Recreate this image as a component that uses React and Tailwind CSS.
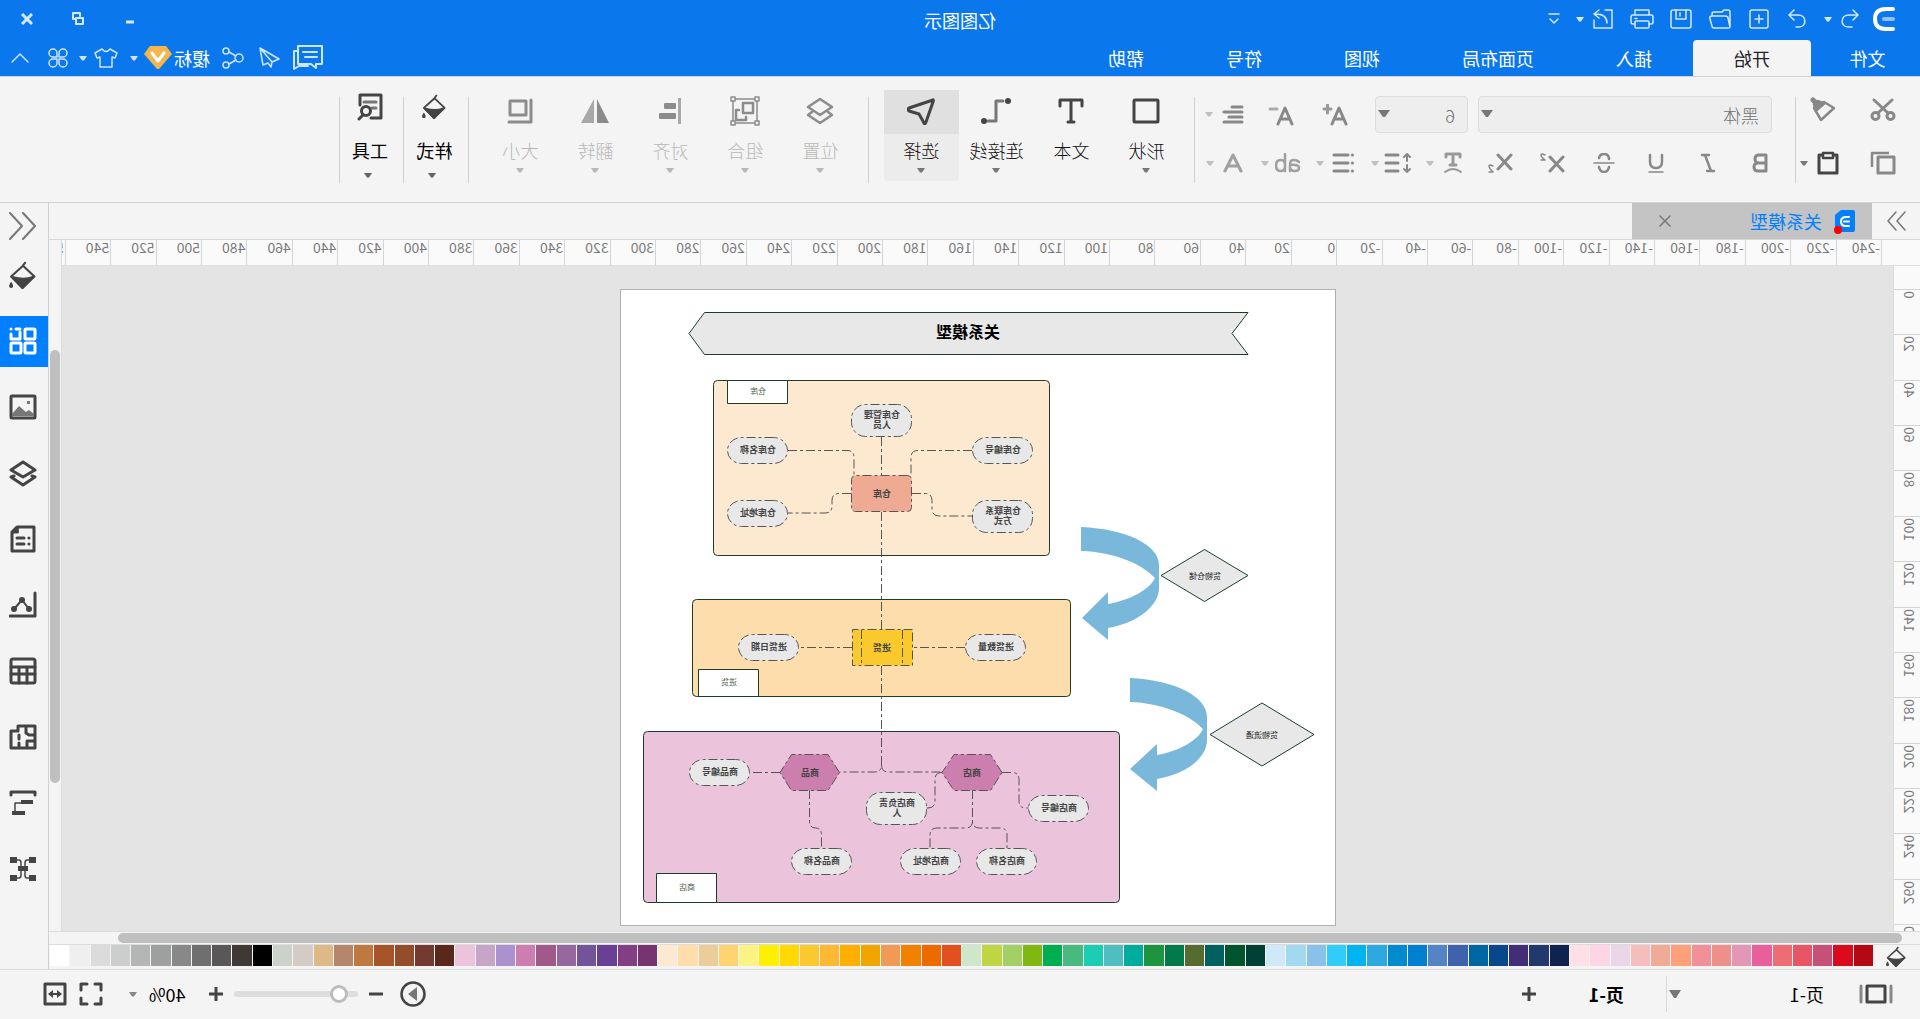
import React from 'react';

const Svg = ({ w = 24, h = 24, sw = 2, className = '', children }) => (
    <svg
        width={w}
        height={h}
        viewBox={`0 0 ${w} ${h}`}
        fill="none"
        stroke="currentColor"
        strokeWidth={sw}
        strokeLinecap="round"
        strokeLinejoin="round"
        className={`shrink-0 ${className}`}
        aria-hidden="true"
    >
        {children}
    </svg>
);

const Caret = ({ className = '' }) => (
    <Svg w={8} h={5} className={className}>
        <path d="M0 0h8L5 4.5H3z" fill="currentColor" stroke="none" />
    </Svg>
);

const SelectCaret = () => (
    <Svg w={12} h={8} className="pointer-events-none absolute right-[3px] top-[14px] text-[#777]">
        <path d="M0 0h12L7 7H5z" fill="currentColor" stroke="none" />
    </Svg>
);

const Bucket = ({ w = 26, h = 28 }) => (
    <svg width={w} height={h} viewBox="0 0 26 28" fill="none" stroke="currentColor" strokeWidth="2" strokeLinejoin="round" className="shrink-0" aria-hidden="true">
        <path d="M10 1l3 4 11 10-11 11L1.500 15 12 5" />
        <path d="M3 15.500c7 3 13 2 20 0L13 26z" fill="currentColor" />
        <path d="M24 20c-3 4-2 6 0 6s3-2 0-6z" fill="currentColor" stroke="none" />
    </svg>
);

const Divider = () => <div className="mt-[20px] h-[86px] w-px shrink-0 bg-[#cfcfcf]" />;

const quickActions = [
    {
        name: '新建',
        icon: (
            <Svg w={20} h={20} sw={1.5}>
                <rect x="1" y="1" width="18" height="18" rx="2" />
                <path d="M10 6v8M6 10h8" />
            </Svg>
        ),
    },
    {
        name: '打开',
        icon: (
            <Svg w={24} h={20} sw={1.5}>
                <path d="M2 18V3q0-2 2-2h4l2 2h8q2 0 2 2v2M2 18l2-9q0-2 3-2h13q3 0 2 3l-2 7q0 2-2 2H4q-2 0-2-1z" />
            </Svg>
        ),
    },
    {
        name: '保存',
        icon: (
            <Svg w={22} h={20} sw={1.5}>
                <rect x="1" y="1" width="20" height="18" rx="2" />
                <path d="M6 1v9h10V1M12 4v3" />
            </Svg>
        ),
    },
    {
        name: '打印',
        icon: (
            <Svg w={24} h={20} sw={1.5}>
                <path d="M5 6V1h14v5M5 15H3q-2 0-2-2V8q0-2 2-2h18q2 0 2 2v5q0 2-2 2h-2M17 9.500h2" />
                <rect x="5" y="12" width="14" height="7" rx="1" />
            </Svg>
        ),
    },
    {
        name: '导出',
        icon: (
            <Svg w={22} h={20} sw={1.5}>
                <path d="M9 1H2v18h18v-8M7 14q0-9 12-9M15 1l5 4-5 4" />
            </Svg>
        ),
    },
];

const menuTabs = ['插入', '页面布局', '视图', '符号', '帮助'];

const TitleBar = () => (
    <div className="relative flex h-10 items-center pb-[2px] pl-[18px] text-[#d6e8fd]">
        <div className="flex w-9 justify-center text-white">
            <Svg w={22} h={24} sw={4}>
                <path d="M2 2h7q11 0 11 10t-11 10H2" />
                <path d="M2 12h9" stroke="#8ec2fb" />
            </Svg>
        </div>
        <button type="button" aria-label="撤销" className="flex w-8 justify-center">
            <Svg w={20} h={20} sw={1.5}>
                <path d="M7 1L2 6l5 5M2 6h9c9 0 9 12 1 12H8" />
            </Svg>
        </button>
        <button type="button" aria-label="撤销列表" className="flex w-3 justify-center"><Caret /></button>
        <button type="button" aria-label="恢复" className="ml-[7px] flex w-9 justify-center">
            <Svg w={20} h={20} sw={1.5}>
                <path d="M13 1l5 5-5 5M18 6H9c-9 0-9 12-1 12h3" />
            </Svg>
        </button>
        {quickActions.map((action) => (
            <button type="button" key={action.name} aria-label={action.name} className="flex w-[39px] justify-center">
                {action.icon}
            </button>
        ))}
        <button type="button" aria-label="导出列表" className="flex w-2 justify-center"><Caret /></button>
        <button type="button" aria-label="更多" className="ml-1 flex w-9 justify-center">
            <Svg w={12} h={14} sw={1.5}>
                <path d="M1 2h10M2 7l4 4 4-4" />
            </Svg>
        </button>

        <h1 className="absolute left-1/2 top-[6px] -translate-x-1/2 text-[18px] font-normal leading-7 text-white">亿图图示</h1>

        <div className="ml-auto flex pr-[2px]">
            <button type="button" aria-label="最小化" className="flex h-8 w-[52px] items-center justify-center">
                <Svg w={10} h={12} sw={3}><path d="M1 9h8" strokeLinecap="butt" /></Svg>
            </button>
            <button type="button" aria-label="还原" className="flex h-8 w-[52px] items-center justify-center">
                <Svg w={12} h={14} sw={2}>
                    <path d="M4 4V1h7v6H8" />
                    <path d="M1 6h7v6H1z" />
                </Svg>
            </button>
            <button type="button" aria-label="关闭" className="flex h-8 w-[50px] items-center justify-center">
                <Svg w={12} h={12} sw={3}><path d="M1 1l10 10M11 1L1 11" strokeLinecap="butt" /></Svg>
            </button>
        </div>
    </div>
);

const MenuBar = () => (
    <nav className="flex h-9 text-[18px] font-normal text-white">
        <button type="button" className="w-[109px] pr-1 leading-9">文件</button>
        <button type="button" className="rounded-t-sm bg-[#f4f4f4] px-[41px] leading-9 text-[#222]">开始</button>
        {menuTabs.map((tab) => (
            <button type="button" key={tab} className="px-[41px] leading-9">{tab}</button>
        ))}

        <div className="ml-auto flex items-center text-[#cfe4fd]">
            <button type="button" aria-label="消息" className="flex w-9 justify-center">
                <Svg w={30} h={26}>
                    <path d="M1 1h24v18H12l-5 4v-4H1zM25 6h4v18l-5-3h-9M6 7h14M6 12h12" />
                </Svg>
            </button>
            <button type="button" aria-label="发送" className="ml-[3px] flex w-9 justify-center">
                <Svg w={22} h={22} sw={1.5}>
                    <path d="M20 1L1 12l7 3 1 5 3-4M20 1L8 15M20 1l-3 17-5-2" />
                </Svg>
            </button>
            <button type="button" aria-label="分享" className="flex w-9 justify-center">
                <Svg w={22} h={22} sw={1.5}>
                    <circle cx="5" cy="11" r="4" />
                    <circle cx="18" cy="4" r="3" />
                    <circle cx="18" cy="18" r="3" />
                    <path d="M8 9l7-4M8 13l7 4" />
                </Svg>
            </button>
            <a href="#account" className="ml-[5px] text-white">榎标</a>
            <Svg w={28} h={24} className="ml-[2px]">
                <path d="M6 0h16l6 8-13 15h-2L0 8z" fill="#f5b64c" stroke="none" />
                <path d="M8 7l6 8 6-8" stroke="#fff" strokeWidth="3" />
            </Svg>
            <button type="button" aria-label="账号菜单" className="flex w-5 justify-center"><Caret /></button>
            <button type="button" aria-label="主题" className="flex w-9 justify-center">
                <Svg w={24} h={20} sw={1.5}>
                    <path d="M8 1L1 5l2 5 3-1v10h12V9l3 1 2-5-7-4q-4 5-8 0z" />
                </Svg>
            </button>
            <button type="button" aria-label="主题列表" className="flex w-[10px] justify-center"><Caret /></button>
            <button type="button" aria-label="应用" className="flex w-10 justify-center">
                <Svg w={20} h={20} sw={1.5}>
                    <path d="M9 9H5a4 4 0 1 1 4-4zM11 9V5a4 4 0 1 1 4 4zM9 11v4a4 4 0 1 1-4-4zM11 11h4a4 4 0 1 1-4 4z" />
                </Svg>
            </button>
            <button type="button" aria-label="收起" className="mr-[2px] flex w-9 justify-center">
                <Svg w={18} h={10} sw={1.5}><path d="M1 9l8-8 8 8" /></Svg>
            </button>
        </div>
    </nav>
);

const textStyles = [
    { name: '加粗', icon: <Svg w={16} h={20} sw={3}><path d="M2 2h7q4 0 4 4t-4 4H2zM2 10h8q4 0 4 4t-4 4H2z" /></Svg> },
    { name: '斜体', icon: <Svg w={16} h={20} sw={2.5}><path d="M7 2h7M2 18h7M11 2L5 18" /></Svg> },
    { name: '下划线', icon: <Svg w={16} h={20} sw={2.5}><path d="M2 2v7q0 6 6 6t6-6V2" /><path d="M1 19h14" strokeWidth="1.500" /></Svg> },
    { name: '删除线', icon: <Svg w={22} h={20} sw={2.5}><path d="M16 5q-1-4-5-4T6 5v1M6 14q1 5 5 5t5-5" /><path d="M1 10h20" strokeWidth="1.500" /></Svg> },
    {
        name: '上标',
        icon: (
            <Svg w={26} h={20} sw={3}>
                <path d="M2 4l13 14M15 4L2 18" />
                <path d="M20 2q4-2 4 0t-4 5h4" strokeWidth="1.500" />
            </Svg>
        ),
    },
    {
        name: '下标',
        icon: (
            <Svg w={26} h={20} sw={3}>
                <path d="M2 2l13 14M15 2L2 16" />
                <path d="M20 13q4-2 4 0t-4 6h4" strokeWidth="1.500" />
            </Svg>
        ),
    },
];

const textMenus = [
    {
        name: '文字效果',
        tone: 'text-[#999]',
        icon: <Svg w={20} h={22} sw={3}><path d="M3 5V2h14v3M10 2v11M7 13h6" /><path d="M2 20q8-6 16 0" strokeWidth="2" /></Svg>,
    },
    {
        name: '行距',
        tone: 'text-[#888]',
        icon: (
            <Svg w={28} h={22} sw={3}>
                <path d="M14 3h12M14 11h12M14 19h12" />
                <path d="M5 2v7M5 13v7M2 5l3-3 3 3M2 17l3 3 3-3" strokeWidth="2" />
            </Svg>
        ),
    },
    {
        name: '项目符号',
        tone: 'text-[#888]',
        icon: <Svg w={22} h={20} sw={3}><path d="M6 2h14M6 10h14M6 18h14M1.500 2h.1M1.500 10h.1M1.500 18h.1" /></Svg>,
    },
    {
        name: '字符间距',
        tone: 'text-[#a0a0a0]',
        icon: <Svg w={26} h={20} sw={2.5}><path d="M2 9q2-2 5-2 4 0 4 4v7M11 12q-9-1-9 3 0 3 4 3 5 0 5-4M16 1v17M16 12q0-5 4-5 5 0 5 5.500T20 18q-4 0-4-5" /></Svg>,
    },
    {
        name: '字体颜色',
        tone: 'text-[#a0a0a0]',
        icon: <Svg w={20} h={20} sw={3}><path d="M2 18L10 2l8 16M5 13h10" /></Svg>,
    },
];

const drawTools = [
    { name: '形状', caret: true, icon: <Svg w={28} h={26} sw={3}><rect x="2" y="2" width="24" height="22" rx="1" /></Svg> },
    { name: '文本', icon: <Svg w={26} h={26} sw={3}><path d="M2 8V2h22v6M13 2v22M10 24h6" /></Svg> },
    {
        name: '连接线',
        caret: true,
        icon: (
            <Svg w={32} h={28} sw={3}>
                <path d="M9 4h7v20h8" stroke="#777" />
                <circle cx="4" cy="4" r="3" fill="currentColor" stroke="none" />
                <circle cx="28" cy="24" r="3" fill="currentColor" stroke="none" />
            </Svg>
        ),
    },
    { name: '选择', caret: true, active: true, icon: <Svg w={28} h={28} sw={3}><path d="M2 3l24 8q2 1 0 3l-10 3-5 9q-1 2-2-1L2 5q-1-3 1-2z" /></Svg> },
];

const arrangeTools = [
    { name: '位置', icon: <Svg w={28} h={28} sw={2.5}><path d="M14 2l12 8-12 8L2 10zM6 15l-4 3 12 8 12-8-4-3" /></Svg> },
    {
        name: '组合',
        icon: (
            <Svg w={30} h={30} sw={1.5}>
                <path d="M3 3h24v24H3z" />
                <path d="M7 7h10v10H7zM21 14h3v10H14v-3" strokeWidth="2.500" />
                <path d="M1 1h4v4H1zM25 1h4v4h-4zM1 25h4v4H1zM25 25h4v4h-4z" fill="#f4f4f4" />
            </Svg>
        ),
    },
    {
        name: '对齐',
        icon: (
            <Svg w={24} h={28}>
                <rect x="1" y="1" width="3" height="26" fill="#a8a8a8" stroke="none" />
                <rect x="6" y="6" width="12" height="6" rx="1" fill="currentColor" stroke="none" />
                <rect x="6" y="16" width="17" height="6" rx="1" fill="currentColor" stroke="none" />
            </Svg>
        ),
    },
    {
        name: '翻转',
        icon: (
            <Svg w={28} h={26}>
                <path d="M0 25L12 1v24z" fill="currentColor" stroke="none" />
                <path d="M28 25L15 1v24z" fill="#a8a8a8" stroke="none" />
            </Svg>
        ),
    },
    { name: '大小', icon: <Svg w={26} h={26} sw={3}><path d="M7 3h16v14H7zM2 2v22h22" /></Svg> },
];

const BigButton = ({ tool, disabled }) => (
    <button
        type="button"
        disabled={disabled}
        className={`flex w-[75px] flex-col items-center rounded-sm ${tool.active ? 'bg-[#ececec]' : ''} ${disabled ? 'text-[#b8b8b8]' : 'text-[#111]'}`}
    >
        <span className={`flex h-11 w-full items-center justify-center pb-[2px] ${tool.active ? 'bg-[#e0e0e0]' : ''} ${disabled ? 'text-[#8c8c8c]' : 'text-[#444]'}`}>
            {tool.icon}
        </span>
        <span className="mt-1 text-[18px] leading-6">{tool.name}</span>
        <Caret className={`mt-[6px] ${tool.caret || disabled ? '' : 'invisible'} ${disabled ? '' : 'text-[#777]'}`} />
    </button>
);

const Ribbon = () => (
    <section className="flex h-[127px] border-y border-[#d2d2d2] bg-[#f4f4f4]">
        <div className="flex w-[124px] flex-col pt-[15px] text-[#888]">
            <div className="flex h-9 items-center">
                <button type="button" aria-label="剪切" className="ml-4 flex w-[42px] justify-center">
                    <Svg w={26} h={24} sw={3}>
                        <circle cx="5.500" cy="18" r="3.500" />
                        <circle cx="20.500" cy="18" r="3.500" />
                        <path d="M4 2l14 13M22 2L8 15" />
                    </Svg>
                </button>
                <button type="button" aria-label="格式刷" className="ml-[18px] flex w-[42px] justify-center">
                    <Svg w={26} h={26} sw={2.5}>
                        <path d="M12 5L2 11l13 12 7-12z" />
                        <path d="M13 5l6-2 4 4-3 8-9-8z" fill="currentColor" strokeWidth="1" />
                        <path d="M21 5l2-2" strokeWidth="5" />
                    </Svg>
                </button>
            </div>
            <div className="mt-[17px] flex h-9 items-center">
                <button type="button" aria-label="复制" className="ml-4 flex w-[42px] justify-center">
                    <Svg w={26} h={24} sw={3}>
                        <rect x="2" y="6" width="16" height="16" />
                        <path d="M7 2h17v14" strokeLinecap="butt" strokeWidth="2.500" />
                    </Svg>
                </button>
                <button type="button" aria-label="粘贴" className="ml-[14px] flex w-10 justify-center text-[#444]">
                    <Svg w={22} h={24} sw={3}>
                        <path d="M5 4H2v18h18V4h-3" />
                        <rect x="6" y="2" width="10" height="5" strokeWidth="2.500" />
                    </Svg>
                </button>
                <button type="button" aria-label="粘贴选项" className="text-[#777]"><Caret /></button>
            </div>
        </div>
        <Divider />

        <div className="flex w-[600px] flex-col pl-[9px] pt-[19px] text-[#888]">
            <div className="flex items-center pl-[14px]">
                <div className="relative w-[294px]">
                    <select aria-label="字体" className="h-[37px] w-full appearance-none rounded-sm border border-[#dcdce0] bg-[#eee] px-3 text-[18px] leading-8 text-[#707070]">
                        <option>黑体</option>
                    </select>
                    <SelectCaret />
                </div>
                <div className="relative ml-[10px] w-[93px]">
                    <select aria-label="字号" className="h-[37px] w-full appearance-none rounded-sm border border-[#dcdce0] bg-[#eee] px-3 text-[18px] leading-8 text-[#707070]">
                        <option>6</option>
                    </select>
                    <SelectCaret />
                </div>
                <button type="button" aria-label="增大字号" className="ml-[14px] flex w-[52px] justify-center">
                    <Svg w={26} h={22} sw={3}><path d="M2 20L9 4l7 16M5 15h8" /><path d="M17 5h7M20.500 1v8" stroke="#999" /></Svg>
                </button>
                <button type="button" aria-label="减小字号" className="flex w-[56px] justify-center">
                    <Svg w={26} h={22} sw={3}><path d="M2 20L9 4l7 16M5 15h8" /><path d="M17 5h7" stroke="#aaa" /></Svg>
                </button>
                <button type="button" aria-label="对齐方式" className="flex w-12 items-center">
                    <span className="flex w-10 justify-center">
                        <Svg w={22} h={20} sw={3}><path d="M2 2h10M2 7h18M2 12h13M2 17h18" /></Svg>
                    </span>
                    <Caret className="text-[#c0c0c0]" />
                </button>
            </div>
            <div className="mt-[14px] flex h-8 items-center">
                {textStyles.map((style) => (
                    <button type="button" key={style.name} aria-label={style.name} className="flex w-[52px] justify-center">
                        {style.icon}
                    </button>
                ))}
                <div className="flex gap-[7px]">
                    {textMenus.map((menu) => (
                        <button type="button" key={menu.name} aria-label={menu.name} className="flex w-12 items-center">
                            <span className={`flex w-10 justify-center pl-[2px] ${menu.tone}`}>{menu.icon}</span>
                            <Caret className="text-[#c0c0c0]" />
                        </button>
                    ))}
                </div>
            </div>
        </div>
        <Divider />

        <div className="flex items-start pl-[10px] pr-[15px] pt-[13px]">
            {drawTools.map((tool) => (
                <div key={tool.name} className="flex h-[91px]"><BigButton tool={tool} /></div>
            ))}
        </div>
        <Divider />

        <div className="flex items-start pl-[10px] pr-[14px] pt-[13px]">
            {arrangeTools.map((tool) => (
                <div key={tool.name} className="flex h-[91px]"><BigButton tool={tool} disabled /></div>
            ))}
        </div>
        <Divider />

        <button type="button" className="flex w-16 flex-col items-center pl-[3px] pt-[14px] font-normal text-black">
            <span className="flex h-8 items-center text-[#444]"><Bucket w={24} h={26} /></span>
            <span className="mt-[15px] text-[18px] leading-6">样式</span>
            <Caret className="ml-1 mt-[11px] text-[#666]" />
        </button>
        <Divider />
        <button type="button" className="flex w-[63px] flex-col items-center pl-[3px] pt-[14px] font-normal text-black">
            <span className="flex h-8 items-center text-[#444]">
                <Svg w={28} h={28} sw={3}>
                    <path d="M13 25H3V2h21v10" />
                    <path d="M8 9h12M8 15h4" stroke="#777" />
                    <circle cx="18" cy="18" r="4.500" />
                    <path d="M21 22l4 4" />
                </Svg>
            </span>
            <span className="mt-[15px] text-[18px] leading-6">工具</span>
            <Caret className="ml-1 mt-[11px] text-[#666]" />
        </button>
        <Divider />
    </section>
);

const TabStrip = () => (
    <div className="flex h-[37px] items-stretch border-b border-[#d8d8d8] bg-[#f4f4f4]">
        <button type="button" aria-label="展开左侧面板" className="flex w-12 items-center pl-[14px] text-[#777]">
            <Svg w={20} h={20} sw={1.5}><path d="M1 1l8 9-8 9M10 1l8 9-8 9" /></Svg>
        </button>
        <div className="flex w-[240px] items-center bg-[#c4c4c4] pl-[17px] pr-[27px]">
            <span className="relative">
                <Svg w={20} h={22}>
                    <path d="M2 0h12l6 5v17H2q-2 0-2-2V2q0-2 2-2z" fill="#0080ff" stroke="none" />
                    <path d="M6 7h3q5 0 5 4.500T9 16H6M6 11.500h5" stroke="#fff" />
                </Svg>
                <span className="absolute -bottom-[2px] -right-[1px] h-2 w-2 rounded-full bg-[#f00]" />
            </span>
            <span className="ml-[13px] text-[18px] font-normal leading-6 text-[#0080ff]">关系模型</span>
            <button type="button" aria-label="关闭标签" className="ml-auto text-[#777]">
                <Svg w={12} h={12} sw={1.5}><path d="M1 1l10 10M11 1L1 11" /></Svg>
            </button>
        </div>
    </div>
);

const hTicks = Array.from({ length: 40 }, (_, i) => i * 20 - 240);
const vTicks = Array.from({ length: 14 }, (_, i) => i * 20);

const HorizontalRuler = () => (
    <div className="flex h-[26px] border-b border-[#dcdcdc] bg-[#fafafa] pl-[38px] text-[14px] font-normal leading-3 text-[#7a7a7a]">
        {hTicks.map((tick) => (
            <div key={tick} className="min-w-0 flex-1 basis-0 border-l border-[#d4d4d4] pl-px pt-px">{tick}</div>
        ))}
        <div className="w-1 overflow-x-clip border-l border-[#d4d4d4] pl-px pt-px">560</div>
    </div>
);

const VerticalRuler = () => (
    <div className="flex w-[27px] shrink-0 flex-col border-r border-[#dcdcdc] bg-[#fafafa] pt-[23px] text-[14px] font-normal leading-3 text-[#7a7a7a]">
        {vTicks.map((tick) => (
            <div key={tick} className="min-h-0 flex-1 basis-0 border-t border-[#d4d4d4] pl-1 pt-px">
                <span className="block rotate-180 [writing-mode:vertical-rl]">{tick}</span>
            </div>
        ))}
        <div className="h-[7px] shrink-0 overflow-y-clip border-t border-[#d4d4d4] pl-1 pt-px">
            <span className="block rotate-180 [writing-mode:vertical-rl]">280</span>
        </div>
    </div>
);

// Attribute bubbles of the relation model: [x, y, height, ...lines]
const bubbles = [
    [425, 115, 33, '仓库管理', '人员'],
    [304, 148, 27, '仓库编号'],
    [549, 148, 27, '仓库名称'],
    [549, 211, 27, '仓库地址'],
    [304, 211, 33, '仓库联系', '方式'],
    [311, 345, 27, '进货数量'],
    [538, 345, 27, '进货日期'],
    [587, 470, 27, '商品编号'],
    [410, 503, 33, '商店负责', '人'],
    [248, 506, 27, '商店编号'],
    [300, 559, 27, '商店名称'],
    [376, 559, 27, '商店地址'],
    [485, 559, 27, '商品名称'],
];

const links = [
    'M455.500 148V186',
    'M365 161.500H419q7 0 7 7V186',
    'M549 161.500H490q-7 0-7 7V186',
    'M425 204.500H412q-7 0-7 7V220q0 7-7 7H365',
    'M486 204.500H498q7 0 7 7V217q0 7 7 7H549',
    'M455.500 223V341',
    'M372 358.500H424',
    'M485 358.500H538',
    'M455.500 377V476q0 7 7 7H497',
    'M455.500 476q0 7-7 7H395',
    'M557 483.500H587',
    'M395 483.500q7 0 7 7V512q0 7 7 7h2',
    'M335 483.500H325q-7 0-7 7V512q0 7-7 7h-3',
    'M364.500 501V532q0 7-7 7H337q-7 0-7 7V559',
    'M364.500 532q0 7 7 7H400q7 0 7 7V559',
    'M527.500 501V532q0 7-6 7-6 0-6 7V559',
];

const Diagram = () => (
    <svg
        width="716"
        height="637"
        viewBox="2 1 714 635"
        role="img"
        aria-label="关系模型"
        textAnchor="middle"
        className="mt-[23px] shrink-0 border border-[#b0b0b0] bg-white"
    >
        <g fill="#e8e8e8" stroke="#1d3d28">
            <path d="M89 23.500H632.500L648 44.500L632.500 65.500H89L105 44.500Z" />
            <rect x="287.500" y="91.500" width="336" height="175" rx="4" fill="#fde9d0" />
            <rect x="266.500" y="310.500" width="378" height="97" rx="4" fill="#fdddab" />
            <rect x="217.500" y="442.500" width="476" height="171" rx="4" fill="#ebc3da" />
            <path d="M549.500 91.500h60v23h-60zM578.500 380.500h60v27h-60zM620.500 584.500h60v29h-60z" fill="#fff" />
            <path d="M89 286.500L132.500 260.500L176 286.500L132.500 312.500Z" />
            <path d="M23 445.500L75 414L127 445.500L75 477Z" />
        </g>

        <g fill="#79b7db">
            <path d="M256 238C210 240 178 256 178 276V299C178 317 200 334 229 339V351L255 329L229 303V315C206 311 187 300 182 289C195 275 222 263 256 262Z" />
            <path d="M207 389C161 391 130 408 130 428V451C130 469 151 485 180 490V502L207 480L180 455V466C157 462 139 451 134 440C147 426 175 414 207 413Z" />
        </g>

        <g fill="none" stroke="#555" strokeDasharray="9 3 3 3">
            {links.map((d) => <path key={d} d={d} />)}
            <rect x="425.500" y="186.500" width="60" height="36" rx="4" fill="#efaa93" />
            <rect x="424.500" y="340.500" width="60" height="36" fill="#fac92d" />
            <path d="M434.500 341v36M475.500 341v36" />
            <path d="M335 483.500L346.500 465.500H383L395 483.500L383 501.500H346.500Z" fill="#cc7eaf" />
            <path d="M497.500 483.500L509 465.500H545.500L557 483.500L545.500 501.500H509Z" fill="#cc7eaf" />
            {bubbles.map(([x, y, h]) => (
                <rect key={`${x}-${y}`} x={x + 0.5} y={y + 0.5} width="60" height={h - 1} rx="14" fill="#e8e8e8" />
            ))}
        </g>

        <g fill="#444" fontSize="9" fontWeight="700">
            {bubbles.map(([x, y, h, first, second]) => (
                <text key={`${x}-${y}`} y={y + Math.floor(h / 2) + (second ? -2 : 3)}>
                    <tspan x={x + 30}>{first}</tspan>
                    {second && <tspan x={x + 30} dy="10">{second}</tspan>}
                </text>
            ))}
            <text x="455" y="208">仓库</text>
            <text x="455" y="362">进货</text>
            <text x="365" y="487">商店</text>
            <text x="527" y="487">商品</text>
        </g>
        <g fill="#222" fontSize="8" fontWeight="400">
            <text x="132" y="290">货物仓储</text>
            <text x="75" y="449">货物流通</text>
        </g>
        <g fill="#4d5d4d" fontSize="8" fontWeight="400">
            <text x="579" y="105">仓库</text>
            <text x="608" y="396">进货</text>
            <text x="650" y="601">商店</text>
        </g>
        <text x="369" y="49" fontSize="16" fontWeight="700" fill="#000">关系模型</text>
    </svg>
);

const swatches = (
    'b40815 db0a1d c75078 e85564 ed6d72 e85f9c e297b6 ee8f8a f2909a ffa07a efab95 f5bebc ead6e7 fdd5e5 ffe0e6 ' +
    '10234e 22396e 422d76 07488c 0066a3 3f62ad 5584c5 0080d0 008bcf 2da9e1 00b4f2 30ccfa 8ac1ea a1d9ee cfeaf6 ' +
    '004135 00552f 00615f 566b2f 007a48 1d953f 00ac9c 50bec1 1acdb3 48ba80 00ae52 7eb810 a3d064 bed643 cee7c9 ' +
    'e2501f ec6a00 f08200 f19a55 f1a500 ffaf00 fdb933 fac92f ffd900 fff000 fdf284 fed370 eacd99 ffdeac fde9d1 ' +
    '783371 823f83 684196 745499 96689f a05a8a cd7eb1 aa92ce c7a5c8 ebc3db 5a281b 743a2f 944d2a a75429 bf7840 ' +
    'b4866c deb887 d4cac6 cad2ca 000000 3e3837 595758 6f6f6f 888888 9ea09f b4b5b5 cccecd dbdbdb efefef ffffff'
).split(' ');

const ColorBar = () => (
    <div className="flex h-6 items-start bg-[#f4f4f4]">
        <button type="button" aria-label="填充颜色" className="flex w-[47px] justify-center pt-px text-[#444]">
            <Bucket w={20} h={22} />
        </button>
        <div className="flex flex-1 gap-px pr-px">
            {swatches.map((color) => (
                <button type="button" key={color} aria-label={`#${color}`} className="h-[21px] min-w-0 flex-1" style={{ backgroundColor: `#${color}` }} />
            ))}
        </div>
    </div>
);

const panels = [
    {
        name: '符号库',
        active: true,
        icon: (
            <Svg w={28} h={28} sw={3}>
                <rect x="2" y="2" width="10" height="10" rx="1" />
                <path d="M17 2h4M26 7v5h-9V5M26 2v.1" />
                <rect x="2" y="16" width="10" height="10" rx="1" />
                <rect x="16" y="16" width="10" height="10" rx="1" />
            </Svg>
        ),
    },
    {
        name: '图片',
        icon: (
            <Svg w={28} h={26} sw={3}>
                <rect x="2" y="2" width="24" height="22" rx="1" />
                <path d="M3 22v-2l5-4 3 2 7-6 7 8v2z" fill="#777" stroke="none" />
                <rect x="7" y="7" width="3" height="3" fill="#777" stroke="none" />
            </Svg>
        ),
    },
    { name: '图层', icon: <Svg w={28} h={28} sw={3}><path d="M14 3l12 8-12 7L2 11zM5 17l-3 1 12 8 12-8-3-1" /></Svg> },
    {
        name: '页面',
        icon: (
            <Svg w={26} h={28} sw={3}>
                <path d="M2 2h17l5 5v19H2z" />
                <path d="M12 13h7M12 19h7M7 13h.1M7 19h.1" />
                <path d="M18 2l6 6h-6z" fill="currentColor" strokeWidth="1" />
            </Svg>
        ),
    },
    {
        name: '图表',
        icon: (
            <Svg w={28} h={28}>
                <path d="M2 2v23h25" strokeWidth="3" />
                <path d="M8 18l7-9 8 9" />
                <circle cx="8" cy="18" r="3" fill="currentColor" stroke="none" />
                <circle cx="15" cy="9" r="3" fill="currentColor" stroke="none" />
                <circle cx="23" cy="18" r="3" fill="currentColor" stroke="none" />
            </Svg>
        ),
    },
    { name: '表格', icon: <Svg w={28} h={28} sw={3}><rect x="2" y="2" width="24" height="24" rx="2" /><path d="M2 10h24M2 17h24M10 10v16M18 10v16" /></Svg> },
    { name: '平面图', icon: <Svg w={28} h={26} sw={3}><path d="M2 2h17v5h7v17H2zM2 11h6l3-2V2M2 17h8v6M18 11v4M18 19v5" /></Svg> },
    {
        name: '甘特图',
        icon: (
            <Svg w={28} h={26}>
                <path d="M2 5V2h24v3" strokeWidth="3" />
                <path d="M15 13h7v8" strokeWidth="1.500" />
                <path d="M4 10h12v4H4zM12 21h13v4H12z" fill="currentColor" stroke="none" />
            </Svg>
        ),
    },
    {
        name: '思维导图',
        icon: (
            <Svg w={28} h={26}>
                <path d="M5 4h5q2 0 2 3v12q0 3-2 3H5M23 4h-5q-2 0-2 3v12q0 3 2 3h5" strokeWidth="1.500" />
                <path d="M1 1h7v6H1zM20 1h7v6h-7zM1 19h7v6H1zM20 19h7v6h-7zM9 10h10v5H9z" fill="currentColor" stroke="none" />
            </Svg>
        ),
    },
];

const Sidebar = () => (
    <aside className="flex w-12 shrink-0 flex-col bg-[#f4f4f4] text-[#444]">
        <button type="button" aria-label="收起面板" className="flex h-[46px] items-center justify-center pl-[2px] text-[#777]">
            <Svg w={28} h={28} sw={2}><path d="M14 1L2 14l12 13M27 1L15 14l12 13" /></Svg>
        </button>
        <button type="button" aria-label="填充" className="flex h-[52px] items-center justify-center pl-[2px]">
            <Bucket w={27} h={29} />
        </button>
        <div className="mt-[15px] flex flex-col gap-[15px]">
            {panels.map((panel) => (
                <button
                    type="button"
                    key={panel.name}
                    aria-label={panel.name}
                    className={`flex h-[51px] items-center justify-center pb-[2px] pl-[2px] ${panel.active ? 'bg-[#0080ff] text-white' : ''}`}
                >
                    {panel.icon}
                </button>
            ))}
        </div>
    </aside>
);

const StatusBar = () => (
    <footer className="flex h-[50px] items-center border-t border-[#dcdcdc] bg-[#f4f4f4] pb-px text-[18px] font-normal text-black">
        <button type="button" aria-label="页面视图" className="ml-[27px] text-[#444]">
            <Svg w={34} h={20} sw={3}>
                <path d="M2 2v16M32 2v16" stroke="#888" />
                <rect x="8" y="2" width="18" height="16" />
            </Svg>
        </button>
        <div className="relative ml-[31px] h-9 w-[162px] border-r border-[#d8d8d8]">
            <select aria-label="当前页" className="h-9 w-full appearance-none bg-transparent px-1 leading-9">
                <option>页-1</option>
            </select>
            <Svg w={12} h={8} className="pointer-events-none absolute right-[2px] top-[14px] text-[#777]">
                <path d="M0 0h12L7 8H5z" fill="currentColor" stroke="none" />
            </Svg>
        </div>
        <button type="button" className="ml-[42px] font-bold">页-1</button>
        <button type="button" aria-label="添加页" className="ml-[52px] text-[#444]">
            <Svg w={16} h={16} sw={3}><path d="M8 1v14M1 8h14" strokeLinecap="butt" /></Svg>
        </button>

        <div className="ml-auto flex items-center text-[#444]">
            <button type="button" aria-label="演示">
                <Svg w={26} h={26} sw={2.5}>
                    <circle cx="13" cy="13" r="11.500" />
                    <path d="M9 6l9 7-9 7z" fill="#777" stroke="none" />
                </Svg>
            </button>
            <button type="button" aria-label="缩小" className="ml-4">
                <Svg w={16} h={16} sw={3}><path d="M1 8h14" strokeLinecap="butt" /></Svg>
            </button>
            <input
                type="range"
                min="0"
                max="400"
                defaultValue="36"
                aria-label="缩放"
                className="ml-[10px] h-[18px] w-[124px] appearance-none bg-transparent [&::-webkit-slider-runnable-track]:h-[6px] [&::-webkit-slider-runnable-track]:rounded-full [&::-webkit-slider-runnable-track]:bg-[#dedede] [&::-webkit-slider-thumb]:-mt-[6px] [&::-webkit-slider-thumb]:h-[18px] [&::-webkit-slider-thumb]:w-[18px] [&::-webkit-slider-thumb]:appearance-none [&::-webkit-slider-thumb]:rounded-full [&::-webkit-slider-thumb]:border-[3px] [&::-webkit-slider-thumb]:border-[#bdbdbd] [&::-webkit-slider-thumb]:bg-white"
            />
            <button type="button" aria-label="放大" className="ml-[10px]">
                <Svg w={16} h={16} sw={3}><path d="M8 1v14M1 8h14" strokeLinecap="butt" /></Svg>
            </button>
            <button type="button" className="ml-[22px] flex items-center text-black">
                40%
                <Caret className="ml-3 text-[#888]" />
            </button>
            <button type="button" aria-label="全屏" className="ml-[26px]">
                <Svg w={24} h={24} sw={3}><path d="M2 8V2h6M16 2h6v6M22 16v6h-6M8 22H2v-6" /></Svg>
            </button>
            <button type="button" aria-label="适合宽度" className="ml-3 mr-[43px]">
                <Svg w={24} h={24} sw={3}>
                    <rect x="2" y="2" width="20" height="20" />
                    <path d="M7 12h10" strokeWidth="2" />
                    <path d="M10 8v8l-5-4zM14 8v8l5-4z" fill="currentColor" stroke="none" />
                </Svg>
            </button>
        </div>
    </footer>
);

const App = () => (
    <div className="flex h-screen -scale-x-100 flex-col overflow-hidden bg-[#f4f4f4] font-light [font-family:'Noto_Sans_CJK_SC',sans-serif]">
        <header className="bg-[#0a77ec]">
            <TitleBar />
            <MenuBar />
        </header>
        <Ribbon />

        <div className="flex min-h-0 flex-1">
            <main className="flex min-w-0 flex-1 flex-col border-r border-[#d0d0d0]">
                <TabStrip />
                <div className="flex min-h-0 flex-1">
                    <div className="flex min-w-0 flex-1 flex-col">
                        <HorizontalRuler />
                        <div className="flex min-h-0 flex-1">
                            <VerticalRuler />
                            <div className="flex min-w-0 flex-1 items-start justify-center overflow-hidden bg-[#e4e4e4] pr-[2px]">
                                <Diagram />
                            </div>
                        </div>
                    </div>
                    {/* Vertical scrollbar */}
                    <div className="flex w-[13px] flex-col border-l border-[#dcdcdc] px-px">
                        <div className="grow-[110]" />
                        <div className="grow-[434] rounded-full bg-[#bfbfbf]" />
                        <div className="grow-[148]" />
                    </div>
                </div>
                {/* Horizontal scrollbar */}
                <div className="flex h-[14px] border-y border-[#dcdcdc] py-px">
                    <div className="grow-[18]" />
                    <div className="grow-[1784] rounded-full bg-[#bfbfbf]" />
                    <div className="grow-[69]" />
                </div>
                <ColorBar />
            </main>
            <Sidebar />
        </div>
        <StatusBar />
    </div>
);

export default App;
